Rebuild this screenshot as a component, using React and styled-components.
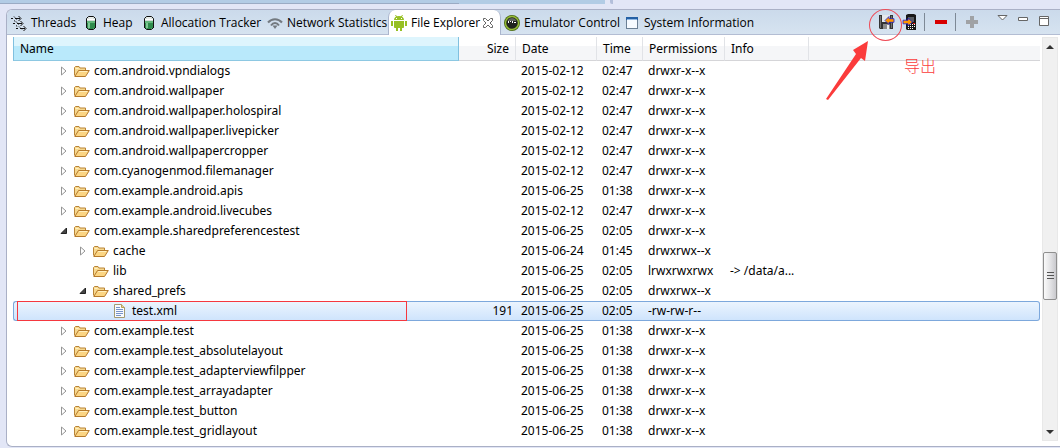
import React, { useState } from "react";
import styled, { createGlobalStyle } from "styled-components";

const GlobalStyle = createGlobalStyle`
    * {
        box-sizing: border-box;
    }

    body {
        margin: 0;
        overflow: hidden;
        background: #e2e6f6;
        color: #000;
        font-family: "Open Sans", "Noto Sans", "Noto Sans CJK SC", sans-serif;
        font-size: 12px;
    }

    button {
        border: 0;
        padding: 0;
        background: none;
        color: inherit;
        font: inherit;
    }
`;

const columns = [
    { title: "Name", width: 446, sorted: true },
    { title: "Size", width: 57, align: "right" },
    { title: "Date", width: 81 },
    { title: "Time", width: 46 },
    { title: "Permissions", width: 82 },
    { title: "Info", width: 84 },
    { title: "" },
];

const files = [
    { name: "com.android.vpndialogs", date: "2015-02-12", time: "02:47", mode: "drwxr-x--x" },
    { name: "com.android.wallpaper", date: "2015-02-12", time: "02:47", mode: "drwxr-x--x" },
    { name: "com.android.wallpaper.holospiral", date: "2015-02-12", time: "02:47", mode: "drwxr-x--x" },
    { name: "com.android.wallpaper.livepicker", date: "2015-02-12", time: "02:47", mode: "drwxr-x--x" },
    { name: "com.android.wallpapercropper", date: "2015-02-12", time: "02:47", mode: "drwxr-x--x" },
    { name: "com.cyanogenmod.filemanager", date: "2015-02-12", time: "02:47", mode: "drwxr-x--x" },
    { name: "com.example.android.apis", date: "2015-06-25", time: "01:38", mode: "drwxr-x--x" },
    { name: "com.example.android.livecubes", date: "2015-02-12", time: "02:47", mode: "drwxr-x--x" },
    { name: "com.example.sharedpreferencestest", date: "2015-06-25", time: "02:05", mode: "drwxr-x--x", state: "open" },
    { name: "cache", level: 1, date: "2015-06-24", time: "01:45", mode: "drwxrwx--x" },
    { name: "lib", level: 1, date: "2015-06-25", time: "02:05", mode: "lrwxrwxrwx", info: "-> /data/a...", state: "leaf" },
    { name: "shared_prefs", level: 1, date: "2015-06-25", time: "02:05", mode: "drwxrwx--x", state: "open" },
    { name: "test.xml", level: 2, size: "191", date: "2015-06-25", time: "02:05", mode: "-rw-rw-r--", state: "leaf", file: true },
    { name: "com.example.test", date: "2015-06-25", time: "01:38", mode: "drwxr-x--x" },
    { name: "com.example.test_absolutelayout", date: "2015-06-25", time: "01:38", mode: "drwxr-x--x" },
    { name: "com.example.test_adapterviewfilpper", date: "2015-06-25", time: "01:38", mode: "drwxr-x--x" },
    { name: "com.example.test_arrayadapter", date: "2015-06-25", time: "01:38", mode: "drwxr-x--x" },
    { name: "com.example.test_button", date: "2015-06-25", time: "01:38", mode: "drwxr-x--x" },
    { name: "com.example.test_gridlayout", date: "2015-06-25", time: "01:38", mode: "drwxr-x--x" },
];

const ThreadsIcon = () => (
    <svg width="16" height="16" viewBox="0 0 16 16" fill="none" stroke="#111">
        <path d="M0 3.500h2M4 3.500h5M2 8.500h2M6 8.500h5M5 13.500h2M9 13.500h5" />
        <path d="m7.500 1 2.500 2.500L7.500 6M9.500 6l2.500 2.500L9.500 11M12.500 11l2.500 2.500-2.500 2.500" />
        <path d="M3 1.500 6 5M3 5.500l2 1.500M5 6.500 8 10M5 10.500l2 1.500M8 11.500l3 3" strokeDasharray="1.500 1" />
    </svg>
);

const HeapIcon = () => (
    <svg width="16" height="16" viewBox="0 0 16 16">
        <path d="M3.500 3.500 5.500 1.500h5l2 2v9l-2 2h-5l-2-2z" fill="#d3ddd8" stroke="#111" />
        <path d="M4 6h8v6.300l-1.700 1.700H5.700L4 12.300z" fill="#2f8c4d" />
        <path d="M4 6h8v2H4z" fill="#62b77b" />
        <path d="M5 8h2v5H5z" fill="#7fc794" />
        <path d="M4 4.500h8M6 3h4" stroke="#fff" />
        <path d="M3.500 5v8M12.500 5v8" stroke="#111" />
    </svg>
);

const NetworkIcon = () => (
    <svg width="16" height="16" viewBox="0 0 16 16" fill="none" stroke="#747a80" strokeWidth="2">
        <path d="M1 7.500C5 3 11 3 15 7.500" />
        <path d="M4 10.500C6.300 7.300 9.700 7.300 12 10.500" />
        <path d="M5.500 10.500h5L8 14z" fill="#747a80" stroke="none" />
    </svg>
);

const AndroidIcon = () => (
    <svg width="16" height="16" viewBox="0 0 16 16" fill="#97c024">
        <path d="M3 5C3 2.500 5 1 8 1s5 1.500 5 4zM3 6h10v6.200c0 .5-.3.800-.8.800H3.800c-.5 0-.8-.3-.8-.8z" />
        <path d="M5 13h2v3H5zM9 13h2v3H9zM0 6h2v5H0zM14 6h2v5h-2z" />
        <path d="M4.500 0 6 2.500M11.500 0 10 2.500" stroke="#97c024" />
        <path d="M5 3h1v1H5zM10 3h1v1h-1z" fill="#fff" />
    </svg>
);

const EmulatorIcon = () => (
    <svg width="16" height="16" viewBox="0 0 16 16">
        <circle cx="8" cy="8" r="8" fill="#4c6b17" />
        <circle cx="8" cy="8" r="7.200" fill="#96bd37" />
        <circle cx="8" cy="8" r="5.800" fill="#20241f" />
        <path d="M3.500 6C5 2 11 2 12.500 6z" fill="#60655f" />
        <path d="M4 6.500h1M6 6.500h1M8 6.500h1M10 7.500h2M4 7.500h1M8 7.500h1" stroke="#fff" />
    </svg>
);

const WindowIcon = () => (
    <svg width="16" height="16" viewBox="0 0 16 16" shapeRendering="crispEdges">
        <path d="M2.500 2.500h11v11h-11z" fill="#f6faff" stroke="#6b7f94" />
        <path d="M2 2h12v3H2z" fill="#2360a5" />
        <path d="M3 4.500h10" stroke="#8fb9e6" />
    </svg>
);

const CloseIcon = () => (
    <svg width="12" height="12" viewBox="0 0 12 12">
        <path
            d="M1.500 1.500h2L6 4l2.500-2.500h2v2L8 6l2.500 2.500v2h-2L6 8l-2.500 2.500h-2v-2L4 6 1.500 3.500z"
            fill="#fff"
            stroke="#666"
        />
    </svg>
);

const PullIcon = () => (
    <svg width="17" height="16" viewBox="0 0 17 16">
        <path d="M0 1h14v14H1l-1-1z" fill="#343434" />
        <path d="M3 1h8v7H3z" fill="#e4e8ec" />
        <path d="M4 10h7v5H4z" fill="#8b8b8b" />
        <path d="M8 11h2v4H8z" fill="#eee" />
        <path d="M1.500 2v12M12.500 2v12" stroke="#707070" />
        <path d="m6 6.500 4-4v2.200h5v3.600h-5v2.200z" fill="#ff9500" stroke="#1b20d0" strokeWidth=".8" />
    </svg>
);

const PushIcon = () => (
    <svg width="16" height="17" viewBox="0 0 16 17">
        <path d="M6 0h6l2 1v15H5l-1-1V1z" fill="#171717" />
        <path d="M6 3h6v5H6z" fill="#575b61" />
        <path d="M6 10.500h1M8 10.500h1M10 10.500h1M12 10.500h1M6 12.500h1M8 12.500h1M10 12.500h1M12 12.500h1M6 14.500h1M8 14.500h1M10 14.500h1" stroke="#fff" />
        <path d="M1 6.200h5V4l4.500 4L6 12V9.800H1z" fill="#ff9500" stroke="#1b20d0" strokeWidth=".8" />
        <path d="M11 9.500h2" stroke="#e22" />
    </svg>
);

const FolderIcon = () => (
    <svg width="16" height="16" viewBox="0 0 16 16">
        <path d="M.5 12.500v-8l1-1h3.500l1 1.500h5.500v2.500" fill="#f7d88f" stroke="#b98436" />
        <path d="M.8 13.500 4.500 7.500h10.800l-3.800 6z" fill="#fbd583" stroke="#b57a2c" strokeLinejoin="round" />
        <path d="M1.500 5.500h3M5.200 8.500h8" stroke="#fff0bf" />
    </svg>
);

const FileIcon = () => (
    <svg width="16" height="16" viewBox="0 0 16 16">
        <path d="M2.500 1.500h7l3 3v10h-10z" fill="#f8fbff" stroke="#a39a72" />
        <path d="M9.500 1.500v3h3" fill="#e7d597" stroke="#b6a05c" />
        <path d="M4 4.500h4M4 6.500h7M4 8.500h7M4 10.500h7M4 12.500h5" stroke="#7893c8" />
    </svg>
);

const tabs = [
    { title: "Threads", width: 72, icon: <ThreadsIcon /> },
    { title: "Heap", width: 58, icon: <HeapIcon /> },
    { title: "Allocation Tracker", width: 126, icon: <HeapIcon /> },
    { title: "Network Statistics", width: 121, icon: <NetworkIcon /> },
    { title: "File Explorer", icon: <AndroidIcon />, active: true },
    { title: "Emulator Control", width: 120, icon: <EmulatorIcon /> },
    { title: "System Information", width: 134, icon: <WindowIcon /> },
];

const ViewTab = ({ tab }) => {
    if (tab.active) {
        return (
            <ActiveTab>
                <TabLabel role="tab" aria-selected={true}>
                    {tab.icon}
                    {tab.title}
                </TabLabel>
                <CloseButton aria-label={`Close ${tab.title}`}>
                    <CloseIcon />
                </CloseButton>
            </ActiveTab>
        );
    }

    return (
        <Tab role="tab" aria-selected={false} $width={tab.width}>
            {tab.icon}
            {tab.title}
        </Tab>
    );
};

const FileRow = ({ file, selected, onSelect }) => {
    const { name, level = 0, size, date, time, mode, info, state = "closed" } = file;

    return (
        <Row $selected={selected} onClick={onSelect}>
            <NameCell>
                <NameContent $level={level}>
                    {state === "leaf" ? (
                        <Twistie as="span" />
                    ) : (
                        <Twistie aria-label={`Toggle ${name}`} aria-expanded={state === "open"}>
                            <svg width="8" height="10" viewBox="0 0 8 10">
                                {state === "open" ? (
                                    <path d="M6.500 2v5.500H1z" fill="#444" stroke="#222" />
                                ) : (
                                    <path d="M1.500 1 6 5 1.500 9z" fill="#fff" stroke="#959595" />
                                )}
                            </svg>
                        </Twistie>
                    )}
                    {file.file ? <FileIcon /> : <FolderIcon />}
                    <FileName>{name}</FileName>
                </NameContent>
                {file.file && <RedFrame />}
            </NameCell>
            <Cell $align="right">{size}</Cell>
            <Cell>{date}</Cell>
            <Cell>{time}</Cell>
            <Cell>{mode}</Cell>
            <Cell>{info}</Cell>
            <Cell />
        </Row>
    );
};

const App = () => {
    const [selected, setSelected] = useState("test.xml");

    return (
        <>
            <GlobalStyle />
            <EditorEdge>
                <EditorPart />
                <EditorRest />
                <EditorSash />
            </EditorEdge>
            <View>
                <TabBar>
                    <Tabs role="tablist">
                        {tabs.map((tab) => (
                            <ViewTab key={tab.title} tab={tab} />
                        ))}
                    </Tabs>
                    <Toolbar>
                        <PullButton aria-label="Pull a file from the device">
                            <PullIcon />
                            <RedCircle />
                            <Arrow width="46" height="62" viewBox="0 0 46 62">
                                <path d="M1 59 31 14l-3-4L43 1l-3 20-4-3L3 60z" fill="#fb3b3b" />
                            </Arrow>
                            <Note lang="zh">导出</Note>
                        </PullButton>
                        <ToolButton aria-label="Push a file onto the device">
                            <PushIcon />
                        </ToolButton>
                        <Separator />
                        <ToolButton aria-label="Delete the selection">
                            <svg width="12" height="4">
                                <path d="M0 0h12v4H0z" fill="#d80000" />
                            </svg>
                        </ToolButton>
                        <Separator />
                        <ToolButton aria-label="New folder">
                            <svg width="12" height="12">
                                <path d="M4 0h4v4h4v4H8v4H4V8H0V4h4z" fill="#a0a2a5" />
                            </svg>
                        </ToolButton>
                        <WindowButtons>
                            <button aria-label="View menu">
                                <svg width="11" height="7">
                                    <path d="M1 .5h9L5.500 5z" fill="#fff" stroke="#666" />
                                </svg>
                            </button>
                            <button aria-label="Minimize">
                                <svg width="11" height="9">
                                    <path d="M.5 2.500h9v3h-9z" fill="#fff" stroke="#666" />
                                </svg>
                            </button>
                            <button aria-label="Maximize">
                                <svg width="11" height="12">
                                    <path d="M.5 1.500h9v9h-9zM0 3.500h10" fill="#fff" stroke="#666" />
                                </svg>
                            </button>
                        </WindowButtons>
                    </Toolbar>
                </TabBar>
                <Content>
                    <Table>
                        <colgroup>
                            {columns.map((column) => (
                                <Col key={column.title} $width={column.width} />
                            ))}
                        </colgroup>
                        <thead>
                            <tr>
                                {columns.map((column) => (
                                    <HeaderCell key={column.title} $sorted={column.sorted} $align={column.align}>
                                        {column.title}
                                    </HeaderCell>
                                ))}
                            </tr>
                        </thead>
                        <tbody>
                            {files.map((file) => (
                                <FileRow
                                    key={file.name}
                                    file={file}
                                    selected={file.name === selected}
                                    onSelect={() => setSelected(file.name)}
                                />
                            ))}
                        </tbody>
                    </Table>
                    <ScrollBar>
                        <ScrollButton aria-label="Scroll up">
                            <svg width="8" height="5">
                                <path d="m0 5 4-4 4 4z" fill="#333" />
                            </svg>
                        </ScrollButton>
                        <Track $grow={199} />
                        <Thumb>
                            <svg width="7" height="8" stroke="#555">
                                <path d="M0 .5h7M0 3.500h7M0 6.500h7" />
                            </svg>
                        </Thumb>
                        <Track $grow={125} />
                        <ScrollButton aria-label="Scroll down">
                            <svg width="8" height="5">
                                <path d="m0 0 4 4 4-4z" fill="#333" />
                            </svg>
                        </ScrollButton>
                    </ScrollBar>
                </Content>
            </View>
        </>
    );
};

export default App;

const EditorEdge = styled.div`
    display: flex;
    height: 9px;
`;

const EditorPart = styled.div`
    flex: 0 0 459px;
    height: 4px;
    background: #b2cce5;
    border-bottom: 1px solid #9aabc4;
`;

const EditorRest = styled.div`
    flex: 0 0 146px;
    height: 4px;
    background: #b2cce5;
`;

const EditorSash = styled.div`
    width: 3px;
    height: 4px;
    margin-left: 5px;
    background: #b3bfda;
    border-radius: 0 0 0 2px;
`;

const View = styled.main`
    margin-left: 6px;
    border: 1px solid #aab0c6;
    border-right: 0;
    border-radius: 6px 0 0 6px;
    background: #fff;
`;

const TabBar = styled.div`
    display: flex;
    justify-content: space-between;
    height: 25px;
    border-bottom: 1px solid #b3bdd3;
    border-radius: 5px 0 0 0;
    background: linear-gradient(#cbdaeb, #d6e3f0);
`;

const Tabs = styled.div`
    display: flex;
    padding-left: 4px;
`;

const Tab = styled.button`
    display: flex;
    align-items: center;
    gap: 4px;
    width: ${(props) => props.$width}px;
    height: 25px;
    white-space: nowrap;

    svg {
        flex: none;
    }
`;

const ActiveTab = styled.div`
    display: flex;
    align-items: center;
    justify-content: space-between;
    width: 113px;
    height: 25px;
    margin-right: 3px;
    padding: 0 6px 0 2px;
    border: 1px solid #aab5cd;
    border-width: 0 1px;
    border-radius: 7px 7px 0 0;
    background: #fff;
`;

const TabLabel = styled.button`
    display: flex;
    align-items: center;
    gap: 4px;
    white-space: nowrap;
`;

const CloseButton = styled.button`
    display: flex;
`;

const Toolbar = styled.div`
    display: flex;
    align-items: center;
    padding-right: 10px;
`;

const ToolButton = styled.button`
    display: flex;
    align-items: center;
    justify-content: center;
    min-width: 16px;
    height: 24px;
`;

const PullButton = styled(ToolButton)`
    position: relative;
    margin-right: 6px;
`;

const RedCircle = styled.span`
    position: absolute;
    top: -1px;
    left: -10px;
    width: 33px;
    height: 32px;
    border: 1px solid #ee4b57;
    border-radius: 50%;
`;

const Arrow = styled.svg`
    position: absolute;
    top: 30px;
    left: -54px;
`;

const Note = styled.span`
    position: absolute;
    top: 44px;
    left: 25px;
    color: #fb3b3b;
    font-size: 16px;
    font-weight: 300;
    line-height: 24px;
    white-space: nowrap;
`;

const Separator = styled.span`
    width: 1px;
    height: 18px;
    margin: 0 8px 0 6px;
    background: #7e8996;
`;

const WindowButtons = styled.div`
    display: flex;
    gap: 10px;
    height: 14px;
    margin-left: 17px;

    button {
        display: flex;
        align-items: flex-start;
    }
`;

const Content = styled.div`
    display: flex;
    gap: 2px;
    padding: 2px 2px 5px 6px;
`;

const Table = styled.table`
    flex: 1;
    min-width: 0;
    table-layout: fixed;
    border-spacing: 0;
    font-family: "Noto Sans", "Open Sans", sans-serif;
    line-height: 18px;
`;

const Col = styled.col`
    width: ${(props) => (props.$width ? `${props.$width}px` : "auto")};
`;

const HeaderCell = styled.th`
    height: 24px;
    padding: 0 6px;
    border-right: 1px solid #e1e3e7;
    border-bottom: 1px solid #d5d5d8;
    background: linear-gradient(#fff 40%, #f5f6f8 40%);
    font-weight: normal;
    text-align: ${(props) => props.$align || "left"};

    &:last-child {
        border-right: 0;
    }

    ${(props) => props.$sorted && `
    border-left: 1px solid #80c0df;
    border-right-color: #80c0df;
    border-bottom-color: #8dc8e2;
    background: linear-gradient(#def5fd 40%, #b9e9fb 40%);
    `}
`;

const Cell = styled.td`
    height: 20px;
    padding: 0 ${(props) => (props.$align ? 3 : 0)}px 0 5px;
    border: 1px solid transparent;
    border-width: 1px 0;
    text-align: ${(props) => props.$align || "left"};
    white-space: nowrap;
`;

const NameCell = styled(Cell)`
    position: relative;
    padding: 0;
    border-left-width: 1px;
`;

const Row = styled.tr`
    ${(props) => props.$selected && `
    td {
        border-color: #7da8dc;
        background: linear-gradient(#edf5fe, #cde3fc) border-box;
    }

    td:first-child {
        border-radius: 3px 0 0 3px;
    }

    td:last-child {
        border-right-width: 1px;
        border-radius: 0 3px 3px 0;
    }
    `}
`;

const NameContent = styled.div`
    display: flex;
    align-items: center;
    height: 18px;
    padding-left: ${(props) => 42 + (props.$level || 0) * 19}px;
`;

const Twistie = styled.button`
    display: flex;
    align-items: center;
    justify-content: center;
    width: 16px;
    height: 16px;
    margin-right: 2px;
`;

const FileName = styled.span`
    margin-left: 4px;
`;

const RedFrame = styled.span`
    position: absolute;
    top: -1px;
    bottom: -1px;
    left: 3px;
    width: 390px;
    border: 1px solid #f5383f;
`;

const ScrollBar = styled.div`
    display: flex;
    flex-direction: column;
    width: 16px;
    border: 1px solid #e8e8e8;
    background: #f0f0f0;
`;

const ScrollButton = styled.button`
    display: flex;
    align-items: center;
    justify-content: center;
    height: 16px;
`;

const Track = styled.div`
    flex: ${(props) => props.$grow};
`;

const Thumb = styled.div`
    display: flex;
    align-items: center;
    justify-content: center;
    height: 48px;
    border: 1px solid #8f8f8f;
    border-radius: 2px;
    background: linear-gradient(90deg, #fafafa, #e4e4e6 50%, #c9c9cd);
`;
